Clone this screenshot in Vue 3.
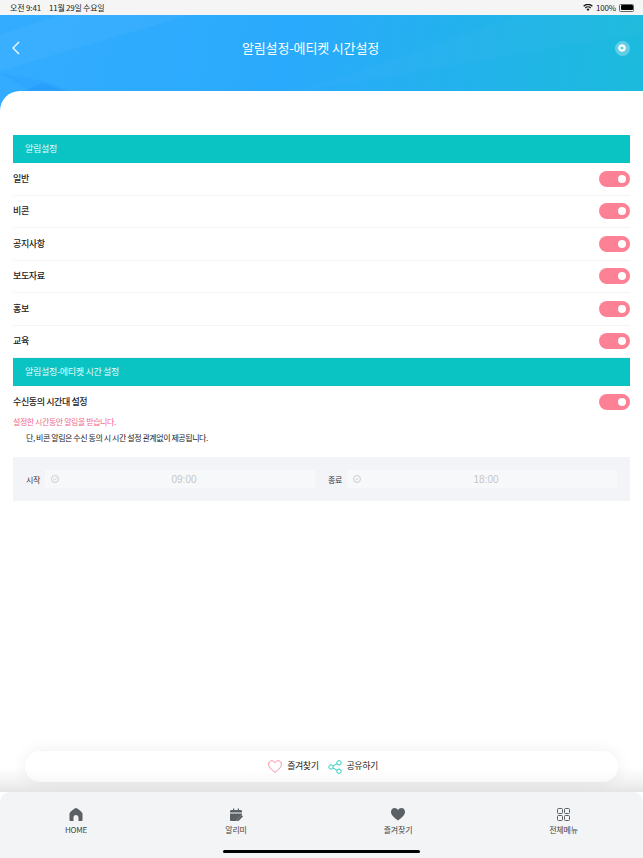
<script setup>
const rows = ['일반', '비콘', '공지사항', '보도자료', '홍보', '교육']
</script>

<template>
  <div class="page">
    <div class="status">
      <span>오전 9:41<span class="date">11월 29일 수요일</span></span>
      <span class="status-right">
        <svg width="10" height="7" viewBox="0 0 11 8"><path d="M5.500 8 3.800 6a2.400 2.400 0 0 1 3.400 0zM2.900 5 1.900 4a5 5 0 0 1 7.200 0l-1 1a3.700 3.700 0 0 0-5.200 0zM1 3 0 2a7.700 7.700 0 0 1 11 0l-1 1a6.400 6.400 0 0 0-9 0z" fill="#111"/></svg>
        <span>100%</span>
        <span class="battery"><i></i></span>
      </span>
    </div>
    <header class="hero">
      <svg class="hero-art" width="643" height="76" viewBox="0 0 643 76" preserveAspectRatio="none">
        <path d="M0 56 L190 0 L60 0 L0 20Z" fill="#fff" opacity=".04"/>
        <path d="M0 58 L30 76 L70 76 L44 66Z" fill="#1f8ff5" opacity=".15"/>
        <path d="M25 76 L42 68 L65 76Z" fill="#1c8ef5" opacity=".3"/>
        <path d="M300 76 L643 18 L643 0 L520 0Z" fill="#fff" opacity=".02"/>
      </svg>
      <svg class="back" width="8" height="14" viewBox="0 0 8 14"><path d="M7 1 1 7l6 6" fill="none" stroke="#fff" stroke-width="1.200"/></svg>
      <h1>알림설정-에티켓 시간설정</h1>
      <span class="gear">
        <svg width="8" height="8" viewBox="0 0 8 8"><circle cx="4" cy="4" r="2.600" fill="none" stroke="#fff" stroke-width="2"/><path d="M4 0v1.500M4 6.500V8M0 4h1.500M6.500 4H8M1.200 1.200l1 1M5.800 5.800l1 1M1.200 6.800l1-1M5.800 2.200l1-1" stroke="#fff" stroke-width="1"/></svg>
      </span>
    </header>

    <main class="content">
      <div class="section-title">알림설정</div>
      <div v-for="r in rows" :key="r" class="row">
        <span class="row-label">{{ r }}</span>
        <span class="toggle"><i></i></span>
      </div>
      <div class="section-title">알림설정-에티켓 시간 설정</div>
      <div class="row plain">
        <span class="row-label">수신동의 시간대 설정</span>
        <span class="toggle"><i></i></span>
      </div>
      <p class="note pink">설정한 시간동안 알림을 받습니다.</p>
      <p class="note black">단, 비콘 알림은 수신 동의 시 시간 설정 관계없이 제공됩니다.</p>
      <div class="time-panel">
        <div class="time-group">
          <label>시작</label>
          <div class="time-field">
            <svg width="8" height="8" viewBox="0 0 8 8"><circle cx="4" cy="4" r="3.500" fill="none" stroke="#bbb" stroke-width=".7"/><path d="M2.500 4.200 3.600 5l2-2" fill="none" stroke="#bbb" stroke-width=".7"/></svg>
            <span>09:00</span>
          </div>
        </div>
        <div class="time-group">
          <label>종료</label>
          <div class="time-field">
            <svg width="8" height="8" viewBox="0 0 8 8"><circle cx="4" cy="4" r="3.500" fill="none" stroke="#bbb" stroke-width=".7"/><path d="M2.500 4.200 3.600 5l2-2" fill="none" stroke="#bbb" stroke-width=".7"/></svg>
            <span>18:00</span>
          </div>
        </div>
      </div>
    </main>

    <div class="action-wrap">
      <div class="action-bar">
        <svg width="14" height="13" viewBox="0 0 14 13"><path d="M7 12.300C3 9.200.6 7 .6 4.200.6 2.200 2 .8 3.800.8 5.100.8 6.300 1.500 7 2.800 7.700 1.500 8.900.8 10.200.8 12 .8 13.400 2.200 13.400 4.200 13.400 7 11 9.200 7 12.300Z" fill="none" stroke="#f88a9e" stroke-width="1"/></svg>
        <span class="act-label">즐겨찾기</span>
        <svg class="share" width="14" height="14" viewBox="0 0 14 14"><g fill="none" stroke="#2fcfbf" stroke-width="1"><circle cx="3" cy="7" r="2.200"/><circle cx="11" cy="2.800" r="2.200"/><circle cx="11" cy="11.200" r="2.200"/><path d="M5 6 9 3.800M5 8l4 2.200"/></g></svg>
        <span class="act-label">공유하기</span>
      </div>
    </div>

    <nav class="tabs">
      <div class="tab">
        <svg width="14" height="13" viewBox="0 0 14 13"><path d="M7 0c1 0 6 3.500 6.500 5.500V12c0 .6-.4 1-1 1H9.500V9.500a2.500 2.500 0 0 0-5 0V13H1.500c-.6 0-1-.4-1-1V5.500C1 3.500 6 0 7 0Z" fill="#5b6064"/></svg>
        <span>HOME</span>
      </div>
      <div class="tab">
        <svg width="14" height="13" viewBox="0 0 14 13"><path d="M1 3.500C1 2.500 1.500 2 2.500 2H4V.5h1.200V2h3.600V.5H10V2h1.500c1 0 1.500.5 1.500 1.500V4.500H1Z" fill="#5b6064"/><path d="M1 5.500h12v1L8 11.500 7.500 13h-5C1.500 13 1 12.500 1 11.500Z" fill="#5b6064"/><path d="M12.500 7 14 8.500 9.500 13H8v-1.500Z" fill="#5b6064"/></svg>
        <span>알리미</span>
      </div>
      <div class="tab">
        <svg width="14" height="13" viewBox="0 0 14 13"><path d="M7 12.500C2.500 9 0 6.800 0 3.900 0 1.700 1.600 0 3.600 0 5 0 6.300.8 7 2.100 7.700.8 9 0 10.400 0 12.400 0 14 1.700 14 3.900 14 6.800 11.500 9 7 12.500Z" fill="#5b6064"/></svg>
        <span>즐겨찾기</span>
      </div>
      <div class="tab last">
        <svg width="13" height="13" viewBox="0 0 13 13"><g fill="none" stroke="#5b6064" stroke-width="1"><rect x=".5" y=".5" width="5" height="5" rx="1"/><rect x="7.500" y=".5" width="5" height="5" rx="1"/><rect x=".5" y="7.500" width="5" height="5" rx="1"/><rect x="7.500" y="7.500" width="5" height="5" rx="1"/></g></svg>
        <span>전체메뉴</span>
      </div>
      <div class="home-indicator"></div>
    </nav>
  </div>
</template>

<style>
html, body { margin: 0; background: #fff; }
</style>

<style scoped>
.page {
  width: 643px;
  height: 858px;
  display: flex;
  flex-direction: column;
  overflow: hidden;
  font-family: "Noto Sans CJK KR", "Noto Sans", sans-serif;
  background: #fff;
  color: #222;
}
.status {
  height: 15px;
  flex: none;
  background: #f5f5f5;
  display: flex;
  justify-content: space-between;
  align-items: center;
  padding: 0 9px 0 10px;
  font-size: 8px;
  color: #222;
  letter-spacing: -.15px;
}
.date { margin-left: 8px; letter-spacing: -.25px; }
.status-right { display: flex; align-items: center; gap: 3px; }
.battery {
  display: block;
  width: 12px;
  height: 5px;
  border: .5px solid #666;
  border-radius: 1.500px;
  padding: .5px;
}
.battery i { display: block; width: 100%; height: 100%; background: #000; border-radius: 1px; }
.hero {
  flex: none;
  height: 96px;
  margin-bottom: -20px;
  position: relative;
  display: flex;
  align-items: center;
  justify-content: space-between;
  padding: 0 13px 30px 12px;
  box-sizing: border-box;
  background: linear-gradient(100deg, #33acff 0%, #2aaafc 45%, #1fb6e4 85%, #1cbbdc 100%);
}
.hero-art { position: absolute; left: 0; top: 0; }
.back { position: relative; }
.hero h1 {
  position: relative;
  margin: 0 14px 0 0;
  font-size: 13px;
  line-height: 16px;
  font-weight: 400;
  color: #fff;
  letter-spacing: -.15px;
}
.gear {
  position: relative;
  width: 15px;
  height: 15px;
  border-radius: 50%;
  background: rgba(255,255,255,.3);
  display: flex;
  align-items: center;
  justify-content: center;
}
.content {
  flex: 1;
  min-height: 0;
  background: #fff;
  border-top-left-radius: 20px;
  padding: 44px 13px 0;
  position: relative;
}
.section-title {
  height: 28px;
  background: #0ac4c4;
  color: #e6fbfa;
  font-size: 9px;
  letter-spacing: -.3px;
  display: flex;
  align-items: center;
  padding-left: 12px;
  padding-bottom: 1px;
  box-sizing: border-box;
}
.row {
  height: 32.500px;
  box-sizing: border-box;
  display: flex;
  justify-content: space-between;
  align-items: center;
  border-bottom: 1px solid #f4f4f4;
  font-size: 9px;
  letter-spacing: -.4px;
  color: #222;
  font-weight: 500;
}
.row-label { margin-top: -1px; }
.row.plain { border-bottom: 0; height: 32px; }
.toggle {
  width: 31px;
  height: 16px;
  border-radius: 8px;
  background: #fd8195;
  display: flex;
  align-items: center;
  justify-content: flex-end;
  padding-right: 4px;
  box-sizing: border-box;
}
.toggle i { width: 8px; height: 8px; border-radius: 50%; background: #fff; display: block; }
.note { margin: 0; font-size: 8px; letter-spacing: -.44px; line-height: 12px; }
.note.pink { color: #f0668c; margin-top: -2px; }
.note.black { color: #222; padding-left: 13px; margin-top: 4px; }
.time-panel {
  margin-top: 13px;
  height: 44px;
  background: #f3f4f8;
  display: flex;
  align-items: center;
  padding: 0 13px;
  gap: 13px;
}
.time-group { display: flex; align-items: center; gap: 6px; flex: 1; }
.time-group label { font-size: 8px; letter-spacing: -.3px; color: #333; white-space: nowrap; width: 13px; }
.time-field {
  flex: 1;
  height: 18px;
  background: #f7f8fa;
  display: flex;
  align-items: center;
  padding: 0 6px;
  color: #c6c6c6;
  font-size: 10px;
  font-family: "Liberation Sans", sans-serif;
}
.time-field span { flex: 1; text-align: center; }
.action-wrap {
  flex: none;
  height: 41px;
  padding: 0 25px;
  background: linear-gradient(#fff 0, #fff 16px, #f2f2f2 31px, #e5e5e5 41px);
  position: relative;
}
.action-bar {
  height: 31px;
  border-radius: 16px;
  background: linear-gradient(#fff 60%, #f8f8f8);
  box-shadow: 0 0 16px rgba(0,0,0,.07);
  display: flex;
  align-items: center;
  justify-content: center;
  padding-left: 3px;
  box-sizing: border-box;
  font-size: 9px;
  letter-spacing: -.45px;
  color: #222;
}
.act-label { margin-left: 5px; padding-bottom: 2px; }
.act-label + svg { margin-left: 9px; }
.action-bar svg { flex: none; }
.tabs {
  flex: none;
  height: 66px;
  background: #f3f4f6;
  border-radius: 10px 10px 0 0;
  display: grid;
  grid-template-columns: 152px 168px 156px 1fr;
  position: relative;
  z-index: 1;
}
.tab {
  display: flex;
  flex-direction: column;
  align-items: center;
  padding-top: 16px;
  gap: 3px;
  font-size: 8px;
  letter-spacing: -.2px;
  color: #444;
}
.tab.last { padding-left: 8px; }
.home-indicator {
  position: absolute;
  left: 223px;
  bottom: 5px;
  width: 197px;
  height: 3px;
  border-radius: 2px;
  background: #000;
}
</style>
